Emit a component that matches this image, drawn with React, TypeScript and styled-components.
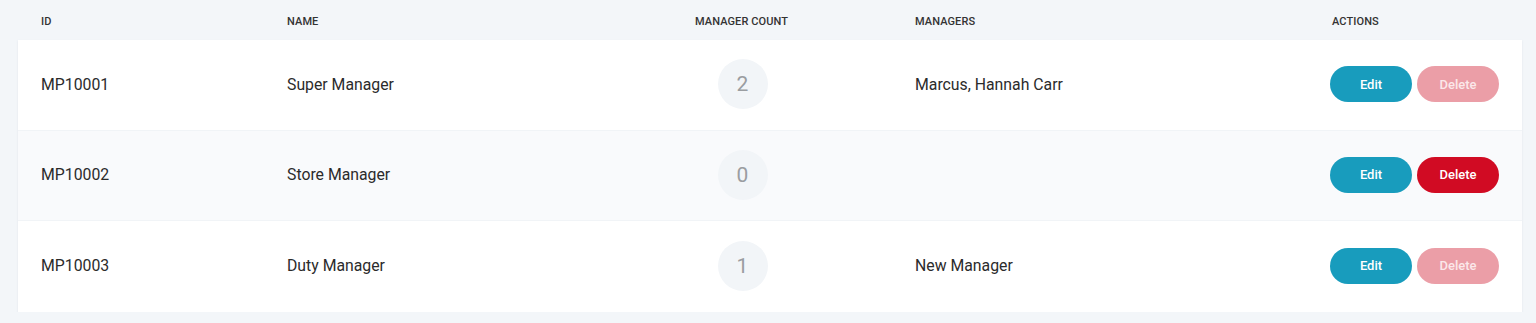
import styled, { createGlobalStyle } from "styled-components";

const GlobalStyle = createGlobalStyle`
  body {
    margin: 0;
    background: #f3f6f9;
    font-family: Roboto, "Liberation Sans", sans-serif;
    color: #2b2b2b;
  }
`;

const Page = styled.div`
  padding: 0 14px 0 18px;
`;

const columns = "246px 408px 220px 1fr 169px";

const HeaderRow = styled.div`
  display: grid;
  grid-template-columns: ${columns};
  align-items: center;
  height: 40px;
  padding: 3px 23px 0;
  box-sizing: border-box;
`;

const HeaderCell = styled.div<{ $indent?: number }>`
  font-size: 11px;
  font-weight: 500;
  color: #333;
  text-transform: uppercase;
  letter-spacing: 0.1px;
  padding-left: ${(p) => p.$indent ?? 0}px;
`;

const Card = styled.div`
  background: #fff;
  box-shadow: 0 1px 2px rgba(180, 190, 200, 0.3);
`;

const Row = styled.div<{ $shaded?: boolean; $last?: boolean }>`
  display: grid;
  grid-template-columns: ${columns};
  align-items: center;
  height: 90.5px;
  padding: 0 23px 1px;
  box-sizing: border-box;
  background: ${(p) => (p.$shaded ? "#f9fafc" : "#fff")};
  border-bottom: ${(p) => (p.$last ? "none" : "1px solid #f1f4f7")};
  font-size: 15.8px;
`;

const CountCell = styled.div`
  width: 95px;
  display: flex;
  justify-content: center;
`;

const CountBadge = styled.div`
  width: 50px;
  height: 50px;
  border-radius: 50%;
  background: #f2f5f8;
  display: flex;
  align-items: center;
  justify-content: center;
  font-size: 21px;
  color: #9a9da1;
`;

const Actions = styled.div`
  display: flex;
  gap: 5px;
`;

const Button = styled.button<{ $variant: "edit" | "delete"; $disabled?: boolean }>`
  width: 82px;
  height: 36px;
  border: none;
  border-radius: 18px;
  font-family: Roboto, "Liberation Sans", sans-serif;
  font-size: 13px;
  font-weight: 500;
  cursor: ${(p) => (p.$disabled ? "default" : "pointer")};
  color: ${(p) => (p.$disabled ? "#fbe8ea" : "#fff")};
  background: ${(p) =>
    p.$variant === "edit" ? "#189cbd" : p.$disabled ? "#eb9ea7" : "#d10b23"};
`;

const roles = [
  { id: "MP10001", name: "Super Manager", count: 2, managers: "Marcus, Hannah Carr", canDelete: false },
  { id: "MP10002", name: "Store Manager", count: 0, managers: "", canDelete: true },
  { id: "MP10003", name: "Duty Manager", count: 1, managers: "New Manager", canDelete: false },
];

export default function App() {
  return (
    <>
      <GlobalStyle />
      <Page>
        <HeaderRow>
          <HeaderCell>ID</HeaderCell>
          <HeaderCell>Name</HeaderCell>
          <HeaderCell>Manager Count</HeaderCell>
          <HeaderCell>Managers</HeaderCell>
          <HeaderCell $indent={2}>Actions</HeaderCell>
        </HeaderRow>
        <Card>
          {roles.map((r, idx) => (
            <Row key={r.id} $shaded={idx % 2 === 1} $last={idx === roles.length - 1}>
              <div>{r.id}</div>
              <div>{r.name}</div>
              <CountCell>
                <CountBadge>{r.count}</CountBadge>
              </CountCell>
              <div>{r.managers}</div>
              <Actions>
                <Button $variant="edit">Edit</Button>
                <Button $variant="delete" $disabled={!r.canDelete}>Delete</Button>
              </Actions>
            </Row>
          ))}
        </Card>
      </Page>
    </>
  );
}
